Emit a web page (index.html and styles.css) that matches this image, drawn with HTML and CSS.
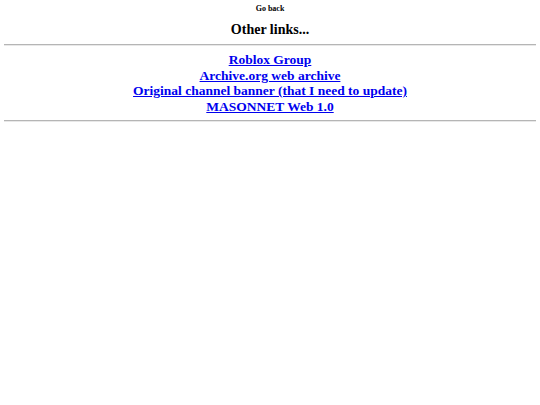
FILE: index.html
```html
<!DOCTYPE html>
<html>
<head>
<meta charset="utf-8">
<link rel="stylesheet" href="styles.css">
</head>
<body>
<div class="page">
  <p class="back">Go back</p>
  <h2 class="title">Other links...</h2>
  <hr class="rule">
  <div class="links">
    <a href="#">Roblox Group</a>
    <a href="#">Archive.org web archive</a>
    <a href="#">Original channel banner (that I need to update)</a>
    <a href="#">MASONNET Web 1.0</a>
  </div>
  <hr class="rule">
</div>
</body>
</html>
```
FILE: styles.css
```css
html, body {
  margin: 0;
  padding: 0;
  background: #fff;
}
.page {
  padding: 0 4px;
  font-family: "Liberation Serif", "Times New Roman", serif;
  text-align: center;
  color: #000;
}
.back {
  margin: 4px 0 0;
  font-size: 8px;
  line-height: 10px;
  font-weight: bold;
}
.title {
  margin: 7px 0 0;
  font-size: 14px;
  line-height: 18px;
  font-weight: bold;
}
.rule {
  margin: 5px 0 0;
  border: 0;
  border-top: 1px solid #b5b5b5;
  border-bottom: 1px solid #e8e8e8;
  height: 0;
}
.links {
  display: flex;
  flex-direction: column;
  align-items: center;
  padding-top: 6px;
  padding-bottom: 6px;
}
.links a {
  color: #0000ee;
  font-weight: bold;
  font-size: 13.5px;
  line-height: 15.6px;
  text-decoration: underline;
}
.links + .rule {
  margin-top: 0;
}
```
